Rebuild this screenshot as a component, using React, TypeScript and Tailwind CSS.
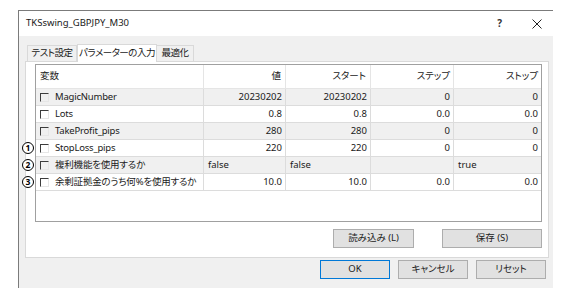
import React from "react";

type Row = {
  name: string;
  value: string;
  start: string;
  step: string;
  stop: string;
  text?: boolean;
  mark?: string;
};

const rows: Row[] = [
  { name: "MagicNumber", value: "20230202", start: "20230202", step: "0", stop: "0" },
  { name: "Lots", value: "0.8", start: "0.8", step: "0.0", stop: "0.0" },
  { name: "TakeProfit_pips", value: "280", start: "280", step: "0", stop: "0" },
  { name: "StopLoss_pips", value: "220", start: "220", step: "0", stop: "0", mark: "1" },
  { name: "複利機能を使用するか", value: "false", start: "false", step: "", stop: "true", text: true, mark: "2" },
  { name: "余剰証拠金のうち何%を使用するか", value: "10.0", start: "10.0", step: "0.0", stop: "0.0", mark: "3" },
];

const Checkbox = () => (
  <span className="w-[9px] h-[9px] border-t border-l border-[#3c3c3c] border-b border-r border-b-[#e6e6e6] border-r-[#e6e6e6] shrink-0" />
);

const Mark = ({ n }: { n: string }) => (
  <span className="absolute left-[-14px] top-[2px] w-[12px] h-[12px] rounded-full border border-black bg-white flex items-center justify-center text-[8.5px] leading-none font-bold text-black">
    {n}
  </span>
);

const Button = ({ label, w, focus }: { label: string; w: string; focus?: boolean }) => (
  <div
    className={`${w} h-[19px] flex items-center justify-center bg-[#e1e1e1] border ${
      focus ? "border-[#0078d7] border-[1.5px]" : "border-[#adadad]"
    } text-[9.5px] text-[#222]`}
  >
    {label}
  </div>
);

export default function App() {
  return (
    <div className="w-[567px] h-[292px] bg-white pt-[10px] pl-[18px] font-['Noto_Sans','Noto_Sans_CJK_JP',sans-serif] [font-feature-settings:'palt'] text-[#1a1a1a]">
      <div className="w-[535px] h-[278px] border-t border-l border-[#7b7b7b] flex flex-col bg-[#f0f0f0]">
        {/* title bar */}
        <div className="h-[25px] bg-white flex items-center pl-[7px] pr-[11px] text-[9.5px]">
          <span>TKSswing_GBPJPY_M30</span>
          <span className="ml-auto mr-[30px] text-[10px] font-bold text-[#333]">?</span>
          <svg width="10" height="10" viewBox="0 0 10 10">
            <path d="M0.5 0.5 L9.5 9.5 M9.5 0.5 L0.5 9.5" stroke="#222" strokeWidth="1" />
          </svg>
        </div>

        <div className="flex-1 flex flex-col pl-[6px] pt-[7px]">
          {/* tabs */}
          <div className="flex items-end h-[18px] pl-[2px] text-[9.5px] tracking-[-0.5px]">
            <div className="w-[50px] h-[16px] flex items-center justify-center border border-b-0 border-[#d9d9d9] bg-[#f0f0f0]">テスト設定</div>
            <div className="w-[80px] h-[18px] flex items-center justify-center border border-b-0 border-[#d9d9d9] bg-white relative top-[1px]">パラメーターの入力</div>
            <div className="w-[37px] h-[16px] flex items-center justify-center border border-b-0 border-l-0 border-[#d9d9d9] bg-[#f0f0f0]">最適化</div>
          </div>

          {/* panel */}
          <div className="w-[524px] h-[197px] bg-white border border-[#d9d9d9] pl-[9px] pt-[2px] flex flex-col text-[9.5px]">
            <div className="w-[507px] h-[158px] border border-[#a0a0a0] flex flex-col">
              <div className="grid grid-cols-[168px_82px_85px_83px_87px] h-[24px] border-b border-[#e5e5e5] bg-white">
                <div className="pl-[4px] flex items-center border-r border-[#e5e5e5]">変数</div>
                <div className="pr-[4px] flex items-center justify-end border-r border-[#e5e5e5]">値</div>
                <div className="pr-[4px] flex items-center justify-end border-r border-[#e5e5e5]">スタート</div>
                <div className="pr-[3px] flex items-center justify-end border-r border-[#e5e5e5]">ステップ</div>
                <div className="pr-[3px] flex items-center justify-end">ストップ</div>
              </div>
              {rows.map((r, i) => {
                const bg = i % 2 === 0 ? "bg-[#f0f0f0]" : "bg-white";
                const num = r.text ? "pl-[4px] justify-start" : "pr-[3px] justify-end";
                return (
                  <div
                    key={r.name}
                    className={`relative grid grid-cols-[168px_82px_85px_83px_87px] h-[17px] border-b border-[#dcdcdc] ${bg}`}
                  >
                    {r.mark && <Mark n={r.mark} />}
                    <div className="pl-[4px] flex items-center gap-[6px] border-r border-[#dcdcdc]">
                      <Checkbox />
                      <span className="tracking-[-0.2px]">{r.name}</span>
                    </div>
                    <div className={`flex items-center border-r border-[#dcdcdc] ${num}`}>{r.value}</div>
                    <div className={`flex items-center border-r border-[#dcdcdc] ${num}`}>{r.start}</div>
                    <div className={`flex items-center border-r border-[#dcdcdc] ${num}`}>{r.step}</div>
                    <div className={`flex items-center ${num}`}>{r.stop}</div>
                  </div>
                );
              })}
            </div>

            <div className="flex justify-end gap-[28px] w-[507px] mt-[7px]">
              <Button label="読み込み (L)" w="w-[81px]" />
              <Button label="保存 (S)" w="w-[100px]" />
            </div>
          </div>

          {/* bottom buttons */}
          <div className="flex justify-end gap-[8px] pr-[7px] mt-[2px]">
            <Button label="OK" w="w-[70px]" focus />
            <Button label="キャンセル" w="w-[70px]" />
            <Button label="リセット" w="w-[70px]" />
          </div>
        </div>
      </div>
    </div>
  );
}
